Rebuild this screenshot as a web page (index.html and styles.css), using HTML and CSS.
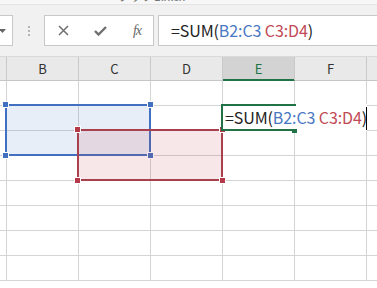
FILE: index.html
```html
<!DOCTYPE html>
<html>
<head>
<meta charset="utf-8">
<link rel="stylesheet" href="styles.css">
</head>
<body>
<div class="app">
  <div class="titlebar"><span class="title">ブック1.xlsx</span></div>
  <div class="fbar">
    <div class="namebox"><svg class="arrow" width="7" height="4" viewBox="0 0 7 4"><path d="M0 0H7L3.5 4Z" fill="#666"/></svg></div>
    <div class="grip"><i></i><i></i><i></i></div>
    <div class="fbtns">
      <svg width="11" height="11" viewBox="0 0 11 11"><path d="M1 1L10 10M10 1L1 10" stroke="#6f6f6f" stroke-width="1.5" fill="none"/></svg>
      <svg width="13" height="11" viewBox="0 0 13 11"><path d="M1 6L4.5 9.5L12 2" stroke="#6f6f6f" stroke-width="2.4" fill="none"/></svg>
      <span class="fx">fx</span>
    </div>
    <div class="finput">=SUM(<span class="rb">B2:C3</span> <span class="rr">C3:D4</span>)</div>
  </div>
  <div class="sheet">
    <div class="colheads">
      <div class="ch">A</div><div class="ch">B</div><div class="ch">C</div><div class="ch">D</div><div class="ch sel">E</div><div class="ch">F</div><div class="ch">G</div>
    </div>
    <div class="rows">
      <div class="row"><i></i><i></i><i></i><i></i><i></i><i></i><i></i></div>
      <div class="row"><i></i><i></i><i></i><i></i><i></i><i></i><i></i></div>
      <div class="row"><i></i><i></i><i></i><i></i><i></i><i></i><i></i></div>
      <div class="row"><i></i><i></i><i></i><i></i><i></i><i></i><i></i></div>
      <div class="row"><i></i><i></i><i></i><i></i><i></i><i></i><i></i></div>
      <div class="row"><i></i><i></i><i></i><i></i><i></i><i></i><i></i></div>
      <div class="row"><i></i><i></i><i></i><i></i><i></i><i></i><i></i></div>
      <div class="row"><i></i><i></i><i></i><i></i><i></i><i></i><i></i></div>
    </div>
    <div class="rng blue"><b class="h tl"></b><b class="h tr"></b><b class="h bl"></b><b class="h br"></b></div>
    <div class="rng red"><b class="h tl"></b><b class="h tr"></b><b class="h bl"></b><b class="h br"></b></div>
    <div class="edit">
      <div class="editbox"></div>
      <div class="fillh"></div>
      <div class="etext">=SUM(<span class="rb">B2:C3</span> <span class="rr">C3:D4</span>)</div>
      <div class="caret"></div>
    </div>
  </div>
</div>
</body>
</html>
```
FILE: styles.css
```css
* { box-sizing: border-box; }
html, body { margin: 0; padding: 0; }
body { width: 377px; height: 288px; overflow: hidden; background: #fff; font-family: "Noto Sans CJK JP", "Noto Sans", sans-serif; }
.app { width: 377px; height: 288px; overflow: hidden; position: relative; }

.titlebar { height: 5px; background: #f7f7f7; overflow: hidden; border-bottom: 1px solid #e4e4e4; }
.title { display: block; margin-left: 118px; margin-top: -11px; font-size: 12px; line-height: 14px; color: #777; }

.fbar { height: 51px; background: #f1f1f1; display: flex; align-items: flex-start; padding-top: 10px; }
.namebox { flex: none; width: 73px; height: 31px; margin-left: -60px; background: #fff; border: 1px solid #c8c8c8; position: relative; }
.arrow { position: absolute; right: 6px; top: 13px; }
.grip { flex: none; width: 31px; height: 31px; display: flex; flex-direction: column; align-items: center; justify-content: center; gap: 2px; }
.grip i { display: block; width: 2px; height: 2px; background: #b4b4b4; }
.fbtns { flex: none; width: 110px; height: 31px; background: #fff; border: 1px solid #c8c8c8; display: flex; align-items: center; justify-content: space-between; padding: 0 12px 0 13px; }
.fx { font-family: "Liberation Serif", serif; font-style: italic; font-size: 14px; color: #666; letter-spacing: -1px; }
.finput { flex: none; width: 240px; height: 31px; margin-left: 4px; background: #fff; border: 1px solid #c8c8c8; padding-left: 12px; font-size: 16px; letter-spacing: -0.1px; line-height: 28px; color: #222; white-space: nowrap; }
.rb { color: #4a78c2; }
.rr { color: #bf4a55; }

.sheet { position: relative; }
.colheads { display: flex; margin-left: -65px; height: 25px; background: #e9e9e9; border-top: 1px solid #dadada; }
.ch { flex: none; width: 72px; height: 24px; border-right: 1px solid #c9c9c9; border-bottom: 1px solid #c6c6c6; text-align: center; font-size: 13px; line-height: 23px; color: #333; }
.ch.sel { background: #d3d3d3; color: #217346; border-bottom: 1px solid #217346; box-shadow: inset 0 -1px 0 #217346; }
.rows { margin-left: -65px; }
.row { display: flex; height: 25px; }
.row i { flex: none; display: block; width: 72px; height: 25px; border-right: 1px solid #d4d4d4; border-bottom: 1px solid #d4d4d4; }

.rng { position: absolute; width: 146px; height: 52px; border: 2px solid; }
.blue { left: 5px; top: 48px; border-color: #4170c0; background: rgba(68,114,196,0.12); }
.red { left: 77px; top: 73px; border-color: #a9404d; background: rgba(200,60,72,0.12); }
.h { position: absolute; width: 7px; height: 7px; border: 1px solid #fff; }
.blue .h { background: #4170c0; }
.red .h { background: #b53a49; }
.h.tl { left: -5px; top: -5px; }
.h.tr { right: -5px; top: -5px; }
.h.bl { left: -5px; bottom: -5px; }
.h.br { right: -5px; bottom: -5px; }

.edit { position: absolute; left: 221px; top: 48px; width: 146px; height: 27px; background: #fff; }
.editbox { position: absolute; left: 0; top: 0; width: 75px; height: 27px; border: 2px solid #217346; border-right: none; }
.fillh { position: absolute; left: 71px; top: 25px; width: 5px; height: 4px; background: #217346; }
.etext { position: absolute; left: 4px; top: 0; font-size: 16px; letter-spacing: -0.1px; line-height: 27px; color: #222; white-space: nowrap; }
.caret { position: absolute; left: 145px; top: 3px; width: 1px; height: 23px; background: #000; }
```
